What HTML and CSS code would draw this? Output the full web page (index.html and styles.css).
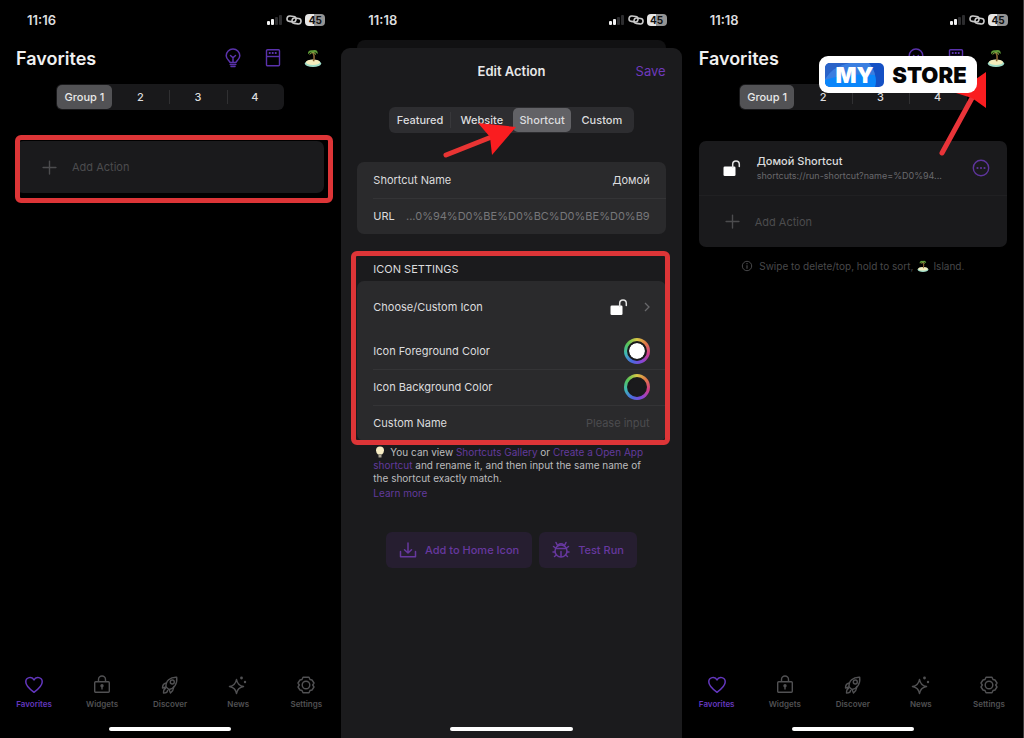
FILE: index.html
```html
<!DOCTYPE html>
<html lang="en">
<head>
<meta charset="utf-8">
<meta name="viewport" content="width=device-width, initial-scale=1">
<title>Favorites and Edit Action</title>
<link rel="stylesheet" href="styles.css">
</head>
<body>
<svg class="defs" aria-hidden="true">
  <symbol id="signal" viewBox="0 0 16 12"><g fill="#f2f2f2"><rect x="0" y="7" width="3" height="4" rx="1"/><rect x="4" y="5" width="3" height="6" rx="1"/></g><g fill="#2c2c2e"><rect x="8" y="3" width="3" height="8" rx="1"/><rect x="12" y="1" width="3" height="10" rx="1"/></g></symbol>
  <symbol id="chain" viewBox="0 0 16 10"><g fill="none" stroke="#c9c9c9" stroke-width="1.6"><rect x="1" y="1.2" width="9" height="5.4" rx="2.7" transform="rotate(8 5 4)"/><rect x="6" y="3.2" width="9" height="5.4" rx="2.7" transform="rotate(8 10 6)"/></g></symbol>
  <symbol id="bulb" viewBox="0 0 18 20"><g fill="none" stroke="currentColor" stroke-width="1.5" stroke-linecap="round" stroke-linejoin="round"><path d="M6 14.5C5.800 12.800 2.200 11.500 2.200 7.800A6.800 6.800 0 0 1 15.800 7.800C15.800 11.500 12.200 12.800 12 14.500Z"/><path d="M6.200 16.500h5.600M7 18.500h4M9 14V9.500M6.500 7.500L9 9.700L11.500 7.500"/></g></symbol>
  <symbol id="panel" viewBox="0 0 16 20"><g fill="none" stroke="currentColor" stroke-width="1.4"><rect x="1.500" y="1.700" width="13" height="16" rx="1"/><path d="M2 8.500h12"/><path stroke-width="1.800" stroke-dasharray="1.800 1.200" d="M3.800 5h9"/></g></symbol>
  <symbol id="island" viewBox="0 0 20 22"><ellipse cx="10" cy="17" rx="9" ry="4" fill="#9fdcc8"/><ellipse cx="10" cy="15.700" rx="7.800" ry="3" fill="#f4edbd"/><path d="M10.500 14.500Q12.500 9 9.500 4.500" fill="none" stroke="#8a6434" stroke-width="1.800"/><path d="M4.500 7Q4 2 9.500 2.500Q15.500 1 15.200 6.500Q12.500 3.900 10 4.500Q7 4 4.500 7Z" fill="#5f9a38"/><path d="M6 8Q6.500 4.500 10 4.500Q13 4.500 13.500 8Q11 5.500 10 5.500Q8 5.500 6 8Z" fill="#86a842"/></symbol>
  <symbol id="unlock" viewBox="0 0 18 18"><rect x="0.500" y="7.500" width="12" height="9.500" rx="1.300" fill="#fff"/><path d="M9.700 8.500V5.200a3.300 3.300 0 0 1 6.600 0V7.500" fill="none" stroke="#e4e4e4" stroke-width="1.500" stroke-linecap="round"/></symbol>
  <symbol id="plus" viewBox="0 0 14 14"><path d="M7 1v12M1 7h12" stroke="currentColor" stroke-width="1.300" stroke-linecap="round"/></symbol>
  <symbol id="dots" viewBox="0 0 18 18"><circle cx="9" cy="9" r="7.700" fill="none" stroke="currentColor" stroke-width="1.400"/><g fill="currentColor"><circle cx="5.500" cy="9" r="1.100"/><circle cx="9" cy="9" r="1.100"/><circle cx="12.500" cy="9" r="1.100"/></g></symbol>
  <symbol id="info" viewBox="0 0 12 12"><circle cx="6" cy="6" r="4.700" fill="none" stroke="currentColor"/><path d="M6 5.300v3.400M6 3v1.200" stroke="currentColor" stroke-width="1.200"/></symbol>
  <symbol id="heart" viewBox="0 0 20 20"><path d="M10 17.300C6.500 14.600 1.800 11.200 1.800 7A4.300 4.300 0 0 1 10 5A4.300 4.300 0 0 1 18.200 7C18.200 11.200 13.500 14.600 10 17.300Z" fill="none" stroke="currentColor" stroke-width="1.500" stroke-linejoin="round"/></symbol>
  <symbol id="lock" viewBox="0 0 20 20"><g fill="none" stroke="currentColor" stroke-width="1.400"><rect x="2.700" y="6.700" width="14.600" height="10.600" rx="1"/><path d="M6.500 6.500V4.500a3.500 3.500 0 0 1 7 0v2M10 11.500v3"/></g><circle cx="10" cy="10.800" r="1.700" fill="currentColor"/></symbol>
  <symbol id="rocket" viewBox="0 0 20 20"><g fill="none" stroke="currentColor" stroke-width="1.400" stroke-linejoin="round" stroke-linecap="round"><path d="M6 12C5.500 6 10 2 16.700 2.300C17.500 9 14 13.500 9 14.500Z"/><circle cx="12.300" cy="7" r="2"/><path d="M6.200 8C3.500 8.500 2.500 11 2.500 13L6 12M14 11.500C13.500 15 12.500 16.500 10.500 18L9 14.500M5.500 13.500C3.500 14 3.500 16 3.500 18C5.500 18 7.500 17.500 7.500 15.500"/></g></symbol>
  <symbol id="sparkle" viewBox="0 0 20 20"><path d="M8.500 4.500Q9.500 10.500 15.500 11.500Q9.500 12.500 8.500 18.500Q7.500 12.500 1.500 11.500Q7.500 10.500 8.500 4.500Z" fill="none" stroke="currentColor" stroke-width="1.500" stroke-linejoin="round"/><g fill="currentColor"><circle cx="13.500" cy="3" r="1.400"/><circle cx="17" cy="7" r="1.200"/></g></symbol>
  <symbol id="gear" viewBox="0 0 20 20"><g fill="none" stroke="currentColor" stroke-width="1.400" stroke-linejoin="round"><path d="M7 2.200H13L14 4.500L16 5L18 8L16.700 10L18 12L16 15L14 15.500L13 17.800H7L6 15.500L4 15L2 12L3.300 10L2 8L4 5L6 4.500Z"/><circle cx="10" cy="10" r="3.800"/></g></symbol>
  <symbol id="download" viewBox="0 0 18 18"><path d="M1.500 10.500V15.700H16.500V10.500M9 2V12M5.500 8.700L9 12L12.500 8.700" fill="none" stroke="currentColor" stroke-width="1.500" stroke-linecap="round" stroke-linejoin="round"/></symbol>
  <symbol id="bug" viewBox="0 0 18 18"><g fill="none" stroke="currentColor" stroke-width="1.500" stroke-linecap="round"><circle cx="9" cy="10" r="6"/><path d="M3.500 7.500H14.500M9 10.500V15.500M5.500 4.500L4 1.500M12.500 4.500L14 1.500M6 4Q9 1.500 12 4M3.500 7L1.500 5.500M14.500 7L16.500 5.500M3 11H1M15 11H17M4.500 14L2.500 15.500M13.500 14L15.500 15.500"/></g></symbol>
</svg>

<main class="screens">
  <section class="phone">
    <div class="status">
      <time>11:16</time>
      <div class="status-icons"><svg class="i-signal"><use href="#signal"/></svg><svg class="i-chain"><use href="#chain"/></svg><span class="battery">45</span></div>
    </div>
    <header class="head">
      <h1>Favorites</h1>
      <div class="tools">
        <button aria-label="Tips"><svg><use href="#bulb"/></svg></button>
        <button aria-label="Panel"><svg><use href="#panel"/></svg></button>
        <button aria-label="Island"><svg><use href="#island"/></svg></button>
      </div>
    </header>
    <nav class="groups">
      <button class="on">Group 1</button><button>2</button><button>3</button><button>4</button>
    </nav>
    <div class="card marked">
      <button class="action add"><svg><use href="#plus"/></svg><span>Add Action</span></button>
    </div>
    <nav class="tabs">
      <a class="active" href="#favorites"><svg><use href="#heart"/></svg>Favorites</a>
      <a href="#widgets"><svg><use href="#lock"/></svg>Widgets</a>
      <a href="#discover"><svg><use href="#rocket"/></svg>Discover</a>
      <a href="#news"><svg><use href="#sparkle"/></svg>News</a>
      <a href="#settings"><svg><use href="#gear"/></svg>Settings</a>
    </nav>
    <div class="home-bar"></div>
  </section>

  <section class="phone edit">
    <div class="status">
      <time>11:18</time>
      <div class="status-icons"><svg class="i-signal"><use href="#signal"/></svg><svg class="i-chain"><use href="#chain"/></svg><span class="battery">45</span></div>
    </div>
    <div class="back-sheet"></div>
    <div class="sheet">
      <header class="sheet-head"><h2>Edit Action</h2><button>Save</button></header>
      <nav class="kinds">
        <button>Featured</button><button>Website</button><button class="on">Shortcut</button><button>Custom</button>
      </nav>
      <div class="form">
        <div class="row"><label for="sname">Shortcut Name</label><input class="field" id="sname" type="text" value="Домой"></div>
        <div class="row"><label for="url">URL</label><input class="field dim" id="url" type="text" value="...0%94%D0%BE%D0%BC%D0%BE%D0%B9"></div>
      </div>
      <section class="icon-settings marked">
        <h3>ICON SETTINGS</h3>
        <div class="form">
          <button class="row choose"><span>Choose/Custom Icon</span><svg class="i-lock"><use href="#unlock"/></svg><svg class="i-chev" viewBox="0 0 6 10"><path d="M1 1L5 5L1 9" fill="none" stroke="#68686b" stroke-width="1.300"/></svg></button>
          <div class="row"><label for="fg">Icon Foreground Color</label><span class="ring"><input id="fg" type="color" value="#ffffff"></span></div>
          <div class="row"><label for="bg">Icon Background Color</label><span class="ring"><input id="bg" type="color" value="#1a1a1c"></span></div>
          <div class="row"><label for="cname">Custom Name</label><input class="field" id="cname" type="text" placeholder="Please input"></div>
        </div>
      </section>
      <div class="help">
        <p><svg class="i-tip" viewBox="0 0 10 12"><path d="M3 8.500Q1 6.500 1 4.500A4 4 0 0 1 9 4.500Q9 6.500 7 8.500Z" fill="#f7edc4"/><path d="M3.500 9h3v2.500h-3z" fill="#a8a292"/></svg>You can view <a href="#gallery">Shortcuts Gallery</a> or <a href="#create">Create a Open App shortcut</a> and rename it, and then input the same name of the shortcut exactly match.</p>
        <a href="#learn">Learn more</a>
      </div>
      <div class="buttons">
        <button><svg><use href="#download"/></svg>Add to Home Icon</button>
        <button><svg><use href="#bug"/></svg>Test Run</button>
      </div>
      <div class="home-bar"></div>
    </div>
    <svg class="arrow arrow-left" viewBox="0 0 76 38" aria-hidden="true"><path d="M4 33L52 14" stroke="#e93433" stroke-width="5" stroke-linecap="round"/><path d="M36 1L74 5L50 33L48 15Z" fill="#fa1d20"/></svg>
  </section>

  <section class="phone last">
    <div class="status">
      <time>11:18</time>
      <div class="status-icons"><svg class="i-signal"><use href="#signal"/></svg><svg class="i-chain"><use href="#chain"/></svg><span class="battery">45</span></div>
    </div>
    <header class="head">
      <h1>Favorites</h1>
      <div class="tools">
        <button aria-label="Tips"><svg><use href="#bulb"/></svg></button>
        <button aria-label="Panel"><svg><use href="#panel"/></svg></button>
        <button aria-label="Island"><svg><use href="#island"/></svg></button>
      </div>
    </header>
    <nav class="groups">
      <button class="on">Group 1</button><button>2</button><button>3</button><button>4</button>
    </nav>
    <div class="card">
      <div class="action">
        <svg class="i-lock"><use href="#unlock"/></svg>
        <div class="detail"><strong>Домой Shortcut</strong><small>shortcuts://run-shortcut?name=%D0%94...</small></div>
        <button class="more" aria-label="More"><svg><use href="#dots"/></svg></button>
      </div>
      <button class="action add"><svg><use href="#plus"/></svg><span>Add Action</span></button>
    </div>
    <p class="hint"><svg class="i-info"><use href="#info"/></svg><span>Swipe to delete/top, hold to sort,</span><svg class="i-isle"><use href="#island"/></svg><span>Island.</span></p>
    <nav class="tabs">
      <a class="active" href="#favorites"><svg><use href="#heart"/></svg>Favorites</a>
      <a href="#widgets"><svg><use href="#lock"/></svg>Widgets</a>
      <a href="#discover"><svg><use href="#rocket"/></svg>Discover</a>
      <a href="#news"><svg><use href="#sparkle"/></svg>News</a>
      <a href="#settings"><svg><use href="#gear"/></svg>Settings</a>
    </nav>
    <div class="home-bar"></div>
    <svg class="arrow arrow-right" viewBox="0 0 50 86" aria-hidden="true"><path d="M4 82L34 27" stroke="#e93439" stroke-width="5" stroke-linecap="round"/><path d="M48 1V37L34 27L18 22Z" fill="#fa1d20"/></svg>
    <div class="logo">
      <span class="my"><svg viewBox="0 0 59 24" preserveAspectRatio="none" aria-hidden="true"><path d="M0 0H59V24H0Z" fill="#1450c4"/><path d="M0 16Q8 3 24 0H0Z" fill="#2a63c8"/><path d="M0 16Q8 3 24 0H44Q50 8 50 12Q24 12 0 20Z" fill="#3a7ee0"/><path d="M0 17Q22 10 50 12Q52 18 50 24H0Z" fill="#0a86fa"/></svg><b>MY</b></span>
      <b class="store">STORE</b>
    </div>
  </section>
</main>
</body>
</html>
```
FILE: styles.css
```css
* { box-sizing: border-box; }
body { margin: 0; background: #000; color: #dcdcde; font-family: Inter, "Liberation Sans", sans-serif; font-size: 11px; }
button, input { font: inherit; color: inherit; background: none; border: 0; padding: 0; margin: 0; }
button { cursor: pointer; }
h1, h2, h3, p { margin: 0; }
a { color: inherit; text-decoration: none; }
svg { display: block; flex: none; }
.defs { display: none; }

.screens { display: flex; gap: 1px; min-height: 100vh; }
.phone { position: relative; flex: 1; min-width: 0; display: flex; flex-direction: column; }
.last { border-right: 1px solid #3a3a3a; }

.status { display: flex; justify-content: space-between; align-items: center; height: 40px; padding: 0 15px 0 27px; font-size: 13px; font-weight: 600; }
.status-icons { display: flex; align-items: center; gap: 3px; }
.i-signal { width: 16px; height: 12px; }
.i-chain { width: 16px; height: 10px; }
.battery { width: 20px; height: 12px; border-radius: 4px; background: linear-gradient(90deg, #e6e6e6 45%, #949494 45%); color: #111; font-size: 10px; font-weight: 700; line-height: 12px; text-align: center; }

.head { display: flex; justify-content: space-between; align-items: center; height: 36px; padding: 0 17px 0 16px; }
.head h1 { font-size: 18px; font-weight: 600; color: #f0f0f0; }
.tools { display: flex; gap: 20px; color: #5a32ac; }
.tools svg { width: 20px; height: 20px; }

.groups, .kinds { display: grid; align-self: center; height: 26px; border-radius: 6px; padding: 1px; font-weight: 500; }
.groups { grid-template-columns: 55fr 58fr 58fr 57fr; width: 67%; margin-top: 8px; background: #19191b; }
.groups button + button + button { background: linear-gradient(#303032, #303032) 0 50% / 1px 14px no-repeat; }
.groups .on { border-radius: 5px; background: #525255; color: #e8e8e8; }

.card { position: relative; margin: 31px 16px 0; border-radius: 7px; background: #1a1a1c; }
.action { display: flex; align-items: center; width: 100%; min-height: 52px; padding: 0 17px 0 24px; text-align: left; }
div.action { min-height: 54px; }
.action + .action { border-top: 1px solid #202022; }
.add { color: #4c4c4e; gap: 15px; padding-left: 26px; font-size: 11px; }
.add svg { width: 15px; height: 15px; }
.i-lock { width: 18px; height: 18px; }
.detail { flex: 1; min-width: 0; display: grid; gap: 2px; padding-left: 16px; }
.detail strong { font-size: 11px; font-weight: 500; line-height: 14px; }
.detail small { font-size: 9px; line-height: 12px; color: #69696c; white-space: nowrap; }
.more { color: #5e359c; }
.more svg { width: 18px; height: 18px; }

.marked { position: relative; }
.marked::after { content: ""; position: absolute; inset: -6px -9px -10px -1px; border: 5px solid #dd3537; border-radius: 6px; pointer-events: none; }

.hint { display: flex; align-items: center; justify-content: center; gap: 4px; margin-top: 12px; color: #48484a; font-size: 10px; }
.i-info { width: 12px; height: 12px; margin-right: 2px; }
.i-isle { width: 12px; height: 14px; }

.tabs { display: grid; grid-template-columns: repeat(5, 1fr); margin-top: auto; color: #515153; font-size: 8px; line-height: 10px; font-weight: 600; }
.tabs a { display: grid; justify-items: center; gap: 4px; }
.tabs svg { width: 20px; height: 20px; }
.tabs .active { color: #6337be; }
.home-bar { align-self: center; width: 36%; height: 4px; margin: 18px 0 7px; border-radius: 2px; background: #fff; }

.back-sheet { height: 8px; margin: 0 16px; border-radius: 8px 8px 0 0; background: #111112; }
.sheet { flex: 1; display: flex; flex-direction: column; border-radius: 9px 9px 0 0; background: #1b1b1d; }
.sheet .home-bar { margin-top: auto; }
.sheet-head { display: grid; grid-template-columns: 1fr auto 1fr; align-items: center; height: 46px; padding: 0 16px; font-size: 13px; }
.sheet-head h2 { grid-column: 2; font-size: 13px; font-weight: 600; color: #e8e8e8; }
.sheet-head button { justify-self: end; color: #6e39bb; }
.kinds { grid-template-columns: 61fr 64fr 58fr 63fr; width: 72%; margin-top: 13px; background: #2d2d30; }
.kinds button + button { background: linear-gradient(#38383b, #38383b) 0 50% / 1px 16px no-repeat; }
.kinds .on + button { background: none; }
.kinds button.on { border-radius: 5px; background: #626266; }

.form { margin: 0 16px; border-radius: 7px; background: #2a2a2c; }
.kinds + .form { margin-top: 29px; }
.row { display: flex; align-items: center; width: 100%; height: 36px; padding: 0 16px; gap: 8px; text-align: left; }
.row + .row { background: linear-gradient(#343436, #343436) 16px 0 / 100% 1px no-repeat; }
.field { flex: 1; min-width: 0; text-align: right; outline: 0; }
.dim { color: #77777a; }
.field::placeholder { color: #4c4c4f; opacity: 1; }
.icon-settings { margin-top: 23px; }
.icon-settings h3 { height: 24px; padding-left: 32px; font-size: 11px; font-weight: 400; line-height: 24px; }
.icon-settings.marked::after { inset: -6px 12px -4px 10px; }
.choose { height: 52px; gap: 16px; }
.choose span { flex: 1; }
.choose + .row { background: none; }
.i-chev { width: 6px; height: 10px; }
.ring { display: flex; margin-left: auto; padding: 3px; border-radius: 50%; background: conic-gradient(#d8c745, #e07548, #d13c86, #8745d6, #4a69e0, #3fb9b4, #58c557, #d8c745); }
.ring input { width: 20px; height: 20px; border: 2px solid #1a1a1c; border-radius: 50%; background: #1a1a1c; overflow: hidden; appearance: none; }
.ring input::-webkit-color-swatch-wrapper { padding: 0; }
.ring input::-webkit-color-swatch { border: 0; border-radius: 50%; }

.help { margin: 5px 32px 0; font-size: 10px; line-height: 13px; color: #bcbcbe; }
.help a { color: #623a9c; }
.help > a { display: block; margin-top: 2px; }
.i-tip { display: inline-block; width: 10px; height: 12px; margin: 0 5px 0 2px; vertical-align: -2px; }

.buttons { display: flex; justify-content: center; gap: 7px; margin-top: 32px; }
.buttons button { display: flex; align-items: center; gap: 8px; height: 36px; padding: 0 13px; border-radius: 6px; background: #261e30; color: #67389f; font-size: 11px; font-weight: 500; }
.buttons svg { width: 18px; height: 18px; }

.arrow { position: absolute; }
.arrow-left { top: 122px; left: 101px; width: 76px; height: 38px; }
.arrow-right { top: 71px; right: 35px; width: 50px; height: 86px; }
.logo { position: absolute; top: 56px; right: 46px; display: flex; align-items: center; gap: 4px; width: 158px; height: 37px; padding: 0 6px; border-radius: 9px; background: #fff; color: #050505; font-size: 22px; line-height: 24px; }
.logo b { font-weight: 900; }
.my { position: relative; width: 59px; height: 24px; border-radius: 5px; overflow: hidden; color: #fff; text-align: center; }
.my svg { position: absolute; inset: 0; width: 100%; height: 100%; }
.my b { position: relative; }
.store { flex: 1; text-align: center; }
```
